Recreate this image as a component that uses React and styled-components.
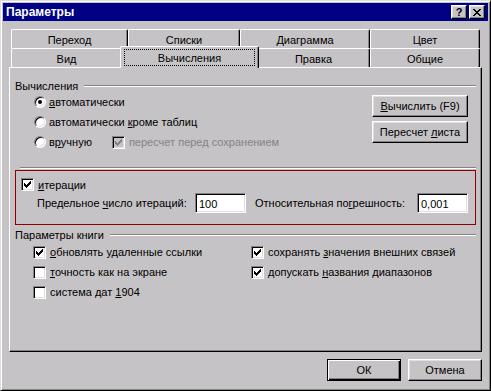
import React from 'react';
import styled, { createGlobalStyle } from 'styled-components';

const face = '#c6c3c6';
const light = '#dedfde';
const shadow = '#848284';
const titleBlue = '#000084';

const GlobalStyle = createGlobalStyle`
  html, body {
    margin: 0;
    padding: 0;
    background: ${face};
  }
  body {
    font-family: "Liberation Sans", Arial, sans-serif;
    font-size: 11px;
    color: #000;
  }
`;

const Window = styled.div`
  box-sizing: border-box;
  width: 491px;
  height: 391px;
  display: flex;
  flex-direction: column;
  background: ${face};
  border: 1px solid;
  border-color: ${light} #000 #000 ${light};
  box-shadow: inset 1px 1px #fff, inset -1px -1px ${shadow};
  padding: 2px;
`;

const TitleBar = styled.div`
  height: 18px;
  display: flex;
  align-items: center;
  padding: 0 3px 0 3px;
  background: ${titleBlue};
  color: #fff;
`;

const TitleText = styled.div`
  flex: 1;
  font-weight: bold;
  font-size: 12px;
`;

const CaptionButtons = styled.div`
  display: flex;
  gap: 2px;
`;

const CaptionButton = styled.div`
  box-sizing: border-box;
  width: 16px;
  height: 14px;
  display: flex;
  align-items: center;
  justify-content: center;
  background: ${face};
  color: #000;
  font-weight: bold;
  font-size: 11px;
  border: 1px solid;
  border-color: #fff #000 #000 #fff;
  box-shadow: inset -1px -1px ${shadow}, inset 1px 1px ${light};
`;

const Body = styled.div`
  flex: 1;
  display: flex;
  flex-direction: column;
  padding: 8px 6px 7px 6px;
`;

const TabStrip = styled.div`
  display: flex;
  flex-direction: column;
  padding-left: 2px;
`;

const TabRow = styled.div`
  display: flex;
  align-items: flex-start;
  height: 19px;
`;

const Tab = styled.div`
  box-sizing: border-box;
  width: ${p => p.$w + (p.$active ? 4 : 0)}px;
  height: ${p => (p.$active ? 22 : 19)}px;
  margin: ${p => (p.$active ? '-2px -2px 0 -2px' : '0')};
  position: ${p => (p.$active ? 'relative' : 'static')};
  z-index: ${p => (p.$active ? 2 : 'auto')};
  display: flex;
  align-items: ${p => (p.$active ? 'stretch' : 'center')};
  justify-content: center;
  padding: ${p => (p.$active ? '2px 3px 2px 3px' : '2px 0 0 0')};
  background: ${face};
  border-top: 1px solid #fff;
  border-left: 1px solid #fff;
  border-right: 1px solid #000;
  border-top-left-radius: 2px;
  border-top-right-radius: 2px;
  box-shadow: inset -1px 0 ${shadow};
`;

const FocusBox = styled.div`
  flex: 1;
  display: flex;
  align-items: center;
  justify-content: center;
  border: 1px dotted #000;
  padding-top: 1px;
`;

const Panel = styled.div`
  flex: 1;
  box-sizing: border-box;
  display: flex;
  flex-direction: column;
  border: 1px solid;
  border-color: #fff #000 #000 #fff;
  box-shadow: inset -1px -1px ${shadow};
  padding: 11px 5px 0 5px;
`;

const GroupHeader = styled.div`
  display: flex;
  align-items: center;
  height: 13px;
  gap: 6px;
  margin-top: ${p => p.$mt || 0}px;
`;

const EtchedLine = styled.div`
  flex: 1;
  height: 0;
  border-top: 1px solid ${shadow};
  border-bottom: 1px solid #fff;
`;

const CalcSection = styled.div`
  height: 75px;
  display: flex;
  justify-content: space-between;
  padding: 0 8px 0 19px;
`;

const OptionColumn = styled.div`
  display: flex;
  flex-direction: column;
`;

const OptionRow = styled.div`
  height: ${p => p.$h || 20}px;
  display: flex;
  align-items: center;
  gap: ${p => p.$gap || 3}px;
  white-space: nowrap;
  color: ${p => (p.$disabled ? shadow : '#000')};
  margin-left: ${p => p.$ml || 0}px;
`;

const Radio = styled.span`
  box-sizing: border-box;
  width: 12px;
  height: 12px;
  border-radius: 50%;
  background: #fff;
  border: 1px solid;
  border-color: ${shadow} #fff #fff ${shadow};
  box-shadow: inset 1px 1px #000, inset -1px -1px ${light};
  display: flex;
  align-items: center;
  justify-content: center;
  &::after {
    content: '';
    width: 4px;
    height: 4px;
    border-radius: 50%;
    background: ${p => (p.$checked ? '#000' : 'transparent')};
  }
`;

const CheckBox = styled.span`
  box-sizing: border-box;
  width: 13px;
  height: 13px;
  flex: none;
  background: ${p => (p.$disabled ? face : '#fff')};
  border: 1px solid;
  border-color: ${shadow} #fff #fff ${shadow};
  box-shadow: inset 1px 1px #000, inset -1px -1px ${light};
  display: flex;
  align-items: center;
  justify-content: center;
  svg {
    display: block;
  }
`;

const ButtonColumn = styled.div`
  display: flex;
  flex-direction: column;
  gap: 4px;
  padding-top: 3px;
`;

const Button = styled.div`
  box-sizing: border-box;
  width: ${p => p.$w}px;
  height: 22px;
  display: flex;
  align-items: center;
  justify-content: center;
  white-space: nowrap;
  background: ${face};
  border: 1px solid;
  border-color: ${p => (p.$default ? '#000' : '#fff #000 #000 #fff')};
  box-shadow: ${p =>
    p.$default
      ? `inset 1px 1px #fff, inset -1px -1px #000, inset -2px -2px ${shadow}`
      : `inset -1px -1px ${shadow}, inset 1px 1px ${light}`};
`;

const Separator = styled.div`
  height: 0;
  margin-left: 5px;
  border-top: 1px solid ${shadow};
  border-bottom: 1px solid #fff;
`;

const IterBox = styled.div`
  box-sizing: border-box;
  height: 55px;
  margin-top: 1px;
  border: 1px solid #8c0000;
  padding: 7px 7px 0 5px;
  display: flex;
  flex-direction: column;
  gap: 2px;
`;

const FieldRow = styled.div`
  display: flex;
  align-items: center;
  height: 20px;
  padding-left: 16px;
`;

const FieldLabel = styled.span`
  width: ${p => p.$w}px;
  flex: none;
  white-space: nowrap;
  margin-left: ${p => p.$ml || 0}px;
`;

const TextInput = styled.div`
  box-sizing: border-box;
  width: 51px;
  height: 20px;
  flex: none;
  margin-left: ${p => (p.$push ? 'auto' : '0')};
  background: #fff;
  border: 1px solid;
  border-color: ${shadow} #fff #fff ${shadow};
  box-shadow: inset 1px 1px #000, inset -1px -1px ${light};
  display: flex;
  align-items: center;
  padding: 1px 0 0 3px;
`;

const BookGrid = styled.div`
  display: flex;
  margin-top: 1px;
  padding-left: 18px;
`;

const BookColumn = styled.div`
  width: ${p => p.$w || 'auto'};
  display: flex;
  flex-direction: column;
`;

const Footer = styled.div`
  display: flex;
  justify-content: flex-end;
  gap: 7px;
  margin-top: 7px;
`;

const Check = ({ color = '#000' }) => (
  <svg width="7" height="7" viewBox="0 0 7 7" shapeRendering="crispEdges">
    <path d="M6 0h1v3h-1v1h-1v1h-1v1h-1v1h-1v-1h-1v-1h-1v-3h1v1h1v1h1v-1h1v-1h1z" fill={color} />
  </svg>
);

const CloseGlyph = () => (
  <svg width="8" height="7" viewBox="0 0 8 7" shapeRendering="crispEdges">
    <path d="M0 0h2v1h1v1h2v-1h1v-1h2v1h-1v1h-1v1h-1v1h1v1h1v1h1v1h-2v-1h-1v-1h-2v1h-1v1h-2v-1h1v-1h1v-1h1v-1h-1v-1h-1v-1h-1z" fill="#000" />
  </svg>
);

const CheckItem = ({ checked, disabled, children, gap = 4, ml }) => (
  <OptionRow $gap={gap} $disabled={disabled} $ml={ml}>
    <CheckBox $disabled={disabled}>{checked && <Check color={disabled ? shadow : '#000'} />}</CheckBox>
    <span>{children}</span>
  </OptionRow>
);

const topTabs = [
  { name: 'Переход', w: 117 },
  { name: 'Списки', w: 112 },
  { name: 'Диаграмма', w: 130 },
  { name: 'Цвет', w: 110 },
];

const frontTabs = [
  { name: 'Вид', w: 111 },
  { name: 'Вычисления', w: 135, active: true },
  { name: 'Правка', w: 113 },
  { name: 'Общие', w: 110 },
];

export default function App() {
  return (
    <>
      <GlobalStyle />
      <Window>
        <TitleBar>
          <TitleText>Параметры</TitleText>
          <CaptionButtons>
            <CaptionButton>?</CaptionButton>
            <CaptionButton><CloseGlyph /></CaptionButton>
          </CaptionButtons>
        </TitleBar>

        <Body>
          <TabStrip>
            <TabRow>
              {topTabs.map(t => (
                <Tab key={t.name} $w={t.w}>{t.name}</Tab>
              ))}
            </TabRow>
            <TabRow>
              {frontTabs.map(t => (
                <Tab key={t.name} $w={t.w} $active={t.active}>
                  {t.active ? <FocusBox>{t.name}</FocusBox> : t.name}
                </Tab>
              ))}
            </TabRow>
          </TabStrip>

          <Panel>
            <GroupHeader>
              <span>Вычисления</span>
              <EtchedLine />
            </GroupHeader>
            <CalcSection>
              <OptionColumn>
                <OptionRow>
                  <Radio $checked />
                  <span><u>а</u>втоматически</span>
                </OptionRow>
                <OptionRow>
                  <Radio />
                  <span>автоматически <u>к</u>роме таблиц</span>
                </OptionRow>
                <OptionRow>
                  <Radio />
                  <span>в<u>р</u>учную</span>
                  <CheckItem checked disabled ml={17}>пересчет перед сохранением</CheckItem>
                </OptionRow>
              </OptionColumn>
              <ButtonColumn>
                <Button $w={96}><span><u>В</u>ычислить (F9)</span></Button>
                <Button $w={96}><span>Пересчет <u>л</u>иста</span></Button>
              </ButtonColumn>
            </CalcSection>
            <Separator />

            <IterBox>
              <OptionRow $h={13} $gap={4}>
                <CheckBox><Check /></CheckBox>
                <span><u>и</u>терации</span>
              </OptionRow>
              <FieldRow>
                <FieldLabel $w={158}>Предельное <u>ч</u>исло итераций:</FieldLabel>
                <TextInput>100</TextInput>
                <FieldLabel $w={150} $ml={9}>Относительная по<u>г</u>решность:</FieldLabel>
                <TextInput $push>0,001</TextInput>
              </FieldRow>
            </IterBox>

            <GroupHeader $mt={3}>
              <span>Параметры книги</span>
              <EtchedLine />
            </GroupHeader>
            <BookGrid>
              <BookColumn $w="218px">
                <CheckItem checked><u>о</u>бновлять удаленные ссылки</CheckItem>
                <CheckItem><u>т</u>очность как на экране</CheckItem>
                <CheckItem>система дат <u>1</u>904</CheckItem>
              </BookColumn>
              <BookColumn>
                <CheckItem checked>сохранять <u>з</u>начения внешних связей</CheckItem>
                <CheckItem checked>допускать <u>н</u>азвания диапазонов</CheckItem>
              </BookColumn>
            </BookGrid>
          </Panel>

          <Footer>
            <Button $w={74} $default>ОК</Button>
            <Button $w={74}>Отмена</Button>
          </Footer>
        </Body>
      </Window>
    </>
  );
}
